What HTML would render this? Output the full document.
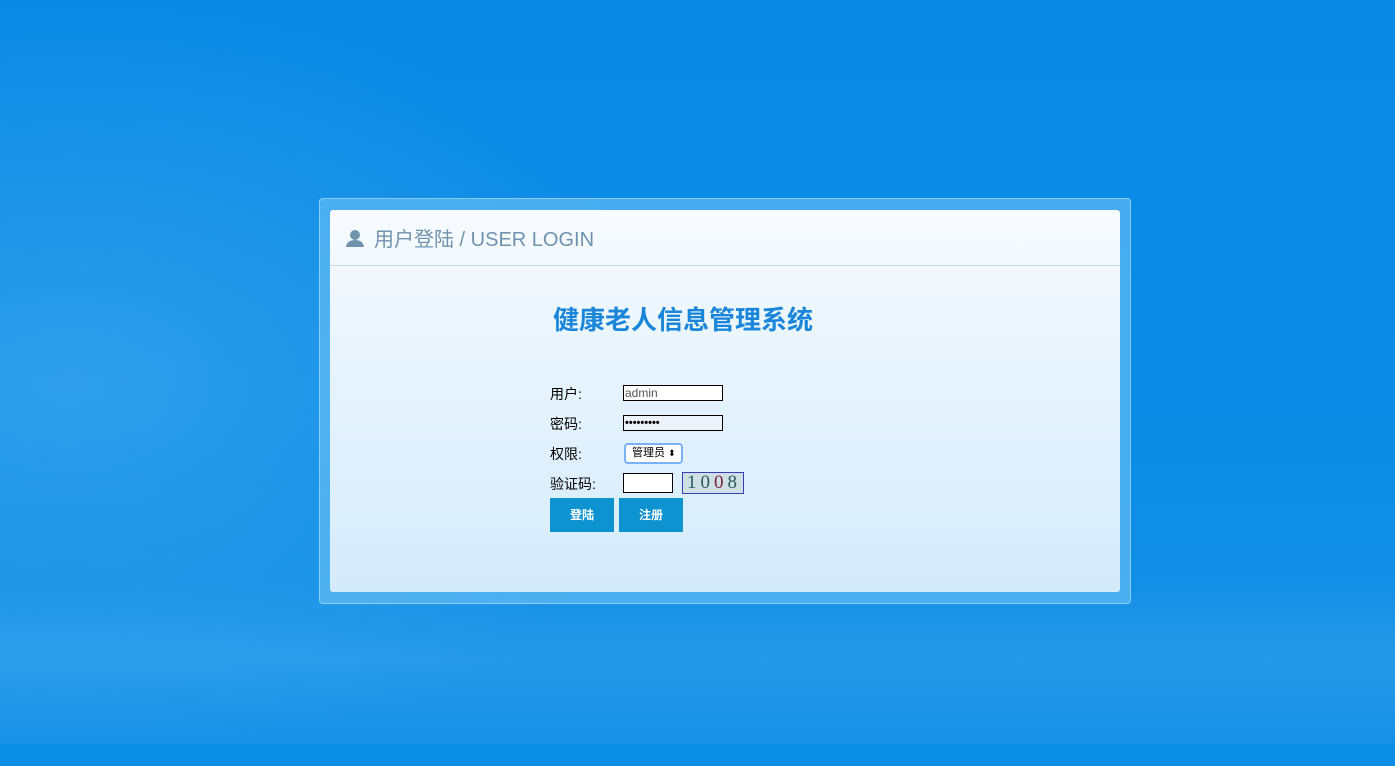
<!DOCTYPE html>
<html><head><meta charset="utf-8"><style>
*{margin:0;padding:0;box-sizing:border-box}
body{width:1395px;height:766px;overflow:hidden;position:relative;font-family:"Liberation Sans","Noto Sans CJK SC",sans-serif;
background:linear-gradient(180deg,#0a8ae6 0%,#0b8de6 60%,#1590e6 85%,#0a8ae6 100%);}
.bgl{position:absolute;left:0;top:0;width:700px;height:766px;background:radial-gradient(ellipse at 10% 50%,rgba(90,180,240,.45),rgba(90,180,240,0) 70%);}
.bgb{position:absolute;left:0;top:580px;width:1395px;height:165px;background:linear-gradient(180deg,rgba(100,190,245,0),rgba(100,190,245,.22) 50%,rgba(100,190,245,.1));}
.bot{position:absolute;left:0;top:744px;width:1395px;height:22px;background:#0a8ee6}
.outer{position:absolute;left:319px;top:198px;width:812px;height:406px;background:rgba(120,200,245,.55);border-radius:4px;border:1px solid rgba(180,225,250,.6)}
.panel{position:absolute;left:330px;top:210px;width:790px;height:382px;border-radius:3px;background:linear-gradient(180deg,#f8fbfe 0%,#e8f4fd 40%,#d4ebfc 100%)}
.hdr{height:56px;border-bottom:1px solid #c9d6e2;display:flex;align-items:center;padding-left:15px;color:#6f93ad;font-size:20px}
.title{position:absolute;left:223px;top:90px;font-size:26px;font-weight:bold;color:#1a86da;font-family:"Liberation Sans","Noto Sans CJK SC",sans-serif}
.row{position:absolute;left:220px;font-size:14px;color:#000}
.inp{position:absolute;left:293px;width:100px;height:16px;border:1px solid #000;background:#fff;font-size:12px;color:#555;line-height:14px;padding-left:1px}
.btn{position:absolute;top:288px;width:64px;height:34px;background:#0e93d1;color:#fff;font-size:12px;font-weight:bold;text-align:center;line-height:34px}
</style></head><body>
<div class="bgl"></div><div class="bgb"></div><div class="bot"></div>
<div class="outer"></div>
<div class="panel">
<div class="hdr"><svg width="20" height="20" viewBox="0 0 20 20"><circle cx="10" cy="7" r="5" fill="#6f93ad"/><path d="M1 19 Q2 12 10 12 Q18 12 19 19Z" fill="#6f93ad"/></svg><span style="margin-left:9px">用户登陆 / USER LOGIN</span></div>
<div class="title">健康老人信息管理系统</div>
<div class="row" style="top:174px">用户:</div>
<div class="inp" style="top:175px">admin</div>
<div class="row" style="top:204px">密码:</div>
<div class="inp" style="top:205px;background:#eef3fb;color:#000;font-size:11px;font-weight:bold">•••••••••</div>
<div class="row" style="top:234px">权限:</div>
<div style="position:absolute;left:294px;top:233px;width:59px;height:21px;border:2px solid #7ab2f5;border-radius:4px;background:#fff;font-size:11px;line-height:17px;padding-left:6px">管理员 <span style="font-size:9px">⬍</span></div>
<div class="row" style="top:264px">验证码:</div>
<div class="inp" style="top:263px;width:50px;height:20px"></div>
<div style="position:absolute;left:352px;top:262px;width:62px;height:22px;border:1px solid #3b3bb5;background:#cfe0e4;font-family:'Liberation Serif',serif;font-size:19px;letter-spacing:4px;line-height:20px;padding-left:4px;color:#2a5a5a">1<span>0</span><span style="color:#7a2040">0</span>8</div>
<div class="btn" style="left:220px">登陆</div>
<div class="btn" style="left:289px">注册</div>
</div>
</body></html>
